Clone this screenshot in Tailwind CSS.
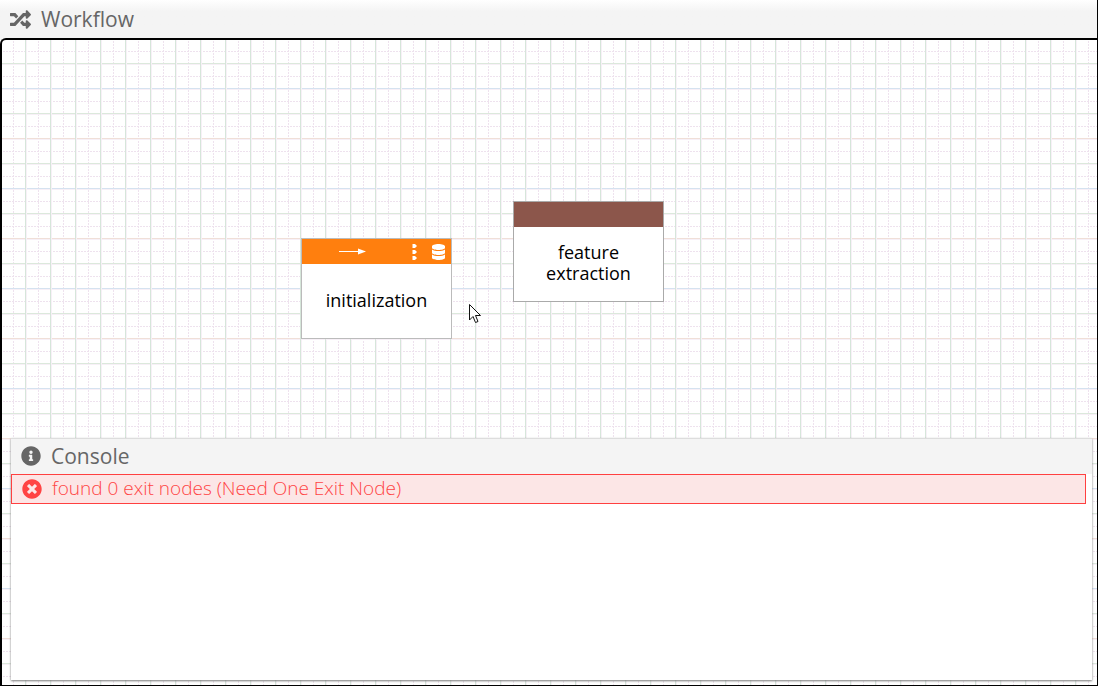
<!DOCTYPE html>
<html lang="en">
<head>
<meta charset="utf-8">
<title>Workflow</title>
<script src="https://cdn.jsdelivr.net/npm/@tailwindcss/browser@4"></script>
</head>
<body class="flex h-screen flex-col overflow-hidden border-r border-black bg-[#f5f5f5] font-['Segoe_UI','Open_Sans','Noto_Sans',sans-serif] text-black">
  <header class="flex h-[38px] shrink-0 items-center gap-2.5 bg-linear-to-b from-white to-[#f4f4f4] to-30% px-2.5">
    <svg class="size-[21px] shrink-0 fill-[#666]" viewBox="0 0 512 512" aria-hidden="true"><path d="M504.971 359.029c9.373 9.373 9.373 24.569 0 33.941l-80 79.984c-15.01 15.01-40.971 4.49-40.971-16.971V416h-58.785a12.004 12.004 0 0 1-8.773-3.812l-70.556-75.596 53.333-57.143L352 336h32v-39.981c0-21.438 25.943-31.998 40.971-16.971l80 79.981zM12 176h84l52.781 56.551 53.333-57.143-70.556-75.596A11.999 11.999 0 0 0 122.785 96H12c-6.627 0-12 5.373-12 12v56c0 6.627 5.373 12 12 12zm372 0v39.984c0 21.46 25.961 31.98 40.971 16.971l80-79.984c9.373-9.373 9.373-24.569 0-33.941l-80-79.981C409.943 24.021 384 34.582 384 56.019V96h-58.785a12.004 12.004 0 0 0-8.773 3.812L96 336H12c-6.627 0-12 5.373-12 12v56c0 6.627 5.373 12 12 12h110.785c3.326 0 6.503-1.381 8.773-3.812L352 176h32z"/></svg>
    <h1 class="text-[21px] leading-8 text-[#666]">Workflow</h1>
  </header>

  <main class="relative min-h-0 flex-1 overflow-hidden rounded-tl-md border-t-2 border-b border-l-2 border-black bg-white">
    <svg class="absolute inset-0 h-full w-full" aria-hidden="true">
      <defs>
        <pattern id="grid" x="23" y="23" width="25" height="100" patternUnits="userSpaceOnUse">
          <path d="M13.5 0V100M0 13.5H25M0 38.5H25M0 63.5H25M0 88.5H25" stroke="#eee2ee" stroke-dasharray="2 1" fill="none"/>
          <path d="M0 .5H25M0 50.5H25" stroke="#dce9dc" fill="none"/>
          <path d="M0 25.5H25" stroke="#d5e2f0" fill="none"/>
          <path d="M0 75.5H25" stroke="#f0dfd8" fill="none"/>
          <path d="M0 1.5H25M0 26.5H25M0 51.5H25M0 76.5H25M1.5 0V100" stroke="#f7f0f7" fill="none"/>
          <path d="M.5 0V100" stroke="#d6e6da" fill="none"/>
        </pattern>
      </defs>
      <rect width="100%" height="100%" fill="url(#grid)"/>
    </svg>

    <article class="absolute top-[198px] left-[299px] flex h-[101px] w-[151px] flex-col border border-[#bbb] bg-white">
      <div class="flex h-[25px] items-center bg-[#ff7f0e]">
        <svg class="ml-9 h-3 w-7" viewBox="0 0 28 12" aria-hidden="true"><path d="M1 5.500H22" stroke="#fff"/><path d="M20 2.500L28 5.500L20 8.500Z" fill="#fff"/></svg>
        <svg class="ml-auto h-[18px] w-2.5" viewBox="0 0 10 18" fill="#fff" aria-hidden="true"><path d="M3 1L5 1L7 3L5 5H3L2 4L3 3L2 2ZM3 7H5L7 9L5 11H3L2 10L3 9L2 8ZM3 13H5L7 15L5 17H3L2 16L3 15L2 14Z"/></svg>
        <svg class="mr-1.5 ml-3 h-4 w-[13px]" viewBox="0 0 448 512" preserveAspectRatio="none" fill="#fff" aria-hidden="true"><path d="M448 73.143v45.714C448 159.143 347.667 192 224 192S0 159.143 0 118.857V73.143C0 32.857 100.333 0 224 0s224 32.857 224 73.143zM448 176v102.857C448 319.143 347.667 352 224 352S0 319.143 0 278.857V176c48.125 33.143 136.208 48.572 224 48.572S399.874 209.143 448 176zm0 160v102.857C448 479.143 347.667 512 224 512S0 479.143 0 438.857V336c48.125 33.143 136.208 48.572 224 48.572S399.874 369.143 448 336z"/></svg>
      </div>
      <p class="flex flex-1 items-center justify-center pb-0.5 text-center text-lg leading-[21px]">initialization</p>
    </article>

    <article class="absolute top-[161px] left-[511px] flex h-[101px] w-[151px] flex-col border border-[#aaa] bg-white">
      <div class="h-[25px] shrink-0 bg-[#8c564b]"></div>
      <p class="flex flex-1 items-center justify-center px-6 pb-0.5 text-center text-lg leading-[21px]">feature extraction</p>
    </article>

    <svg class="absolute top-[264px] left-[467px] h-5 w-3" viewBox="0 0 12 20" aria-hidden="true"><path d="M.5 .5V16L4 12.5L6.5 18.5L9 17.5L6.5 11.5H11.5Z" fill="#fff" stroke="#111"/></svg>

    <section class="absolute right-[5px] bottom-[5px] left-[9px] h-[242px] border-t border-[#ddd] bg-white shadow-[0_1px_2px_#777]" aria-label="Console">
      <div class="flex h-[35px] items-center gap-2.5 bg-[#f4f4f4] px-2.5 pb-0.5">
        <svg class="size-5 shrink-0 fill-[#666]" viewBox="0 0 512 512" aria-hidden="true"><path d="M256 8C119.043 8 8 119.083 8 256c0 136.997 111.043 248 248 248s248-111.003 248-248C504 119.083 392.957 8 256 8zm0 110c23.196 0 42 18.804 42 42s-18.804 42-42 42-42-18.804-42-42 18.804-42 42-42zm56 254c0 6.627-5.373 12-12 12h-88c-6.627 0-12-5.373-12-12v-24c0-6.627 5.373-12 12-12h12v-64h-12c-6.627 0-12-5.373-12-12v-24c0-6.627 5.373-12 12-12h64c6.627 0 12 5.373 12 12v100h12c6.627 0 12 5.373 12 12v24z"/></svg>
        <h2 class="text-[21px] leading-8 text-[#666]">Console</h2>
      </div>
      <div class="mr-1.5 flex h-[30px] items-center gap-2.5 border border-[#ff4040] bg-[#fce6e6] px-2.5" role="alert">
        <svg class="size-5 shrink-0 fill-[#f44]" viewBox="0 0 512 512" aria-hidden="true"><path d="M256 8C119 8 8 119 8 256s111 248 248 248 248-111 248-248S393 8 256 8zm121.600 313.100c4.700 4.700 4.700 12.300 0 17L338 377.600c-4.700 4.700-12.300 4.700-17 0L256 312l-65.100 65.600c-4.700 4.700-12.300 4.700-17 0L134.400 338c-4.700-4.700-4.700-12.300 0-17l65.600-65-65.600-65.100c-4.700-4.700-4.700-12.300 0-17l39.600-39.600c4.700-4.700 12.300-4.700 17 0l65 65.700 65.100-65.600c4.700-4.700 12.300-4.700 17 0l39.600 39.600c4.700 4.700 4.700 12.300 0 17L312 256l65.600 65.100z"/></svg>
        <span class="pb-0.5 text-[19px] leading-7 font-light text-[#f44]">found 0 exit nodes (Need One Exit Node)</span>
      </div>
    </section>
  </main>
</body>
</html>
